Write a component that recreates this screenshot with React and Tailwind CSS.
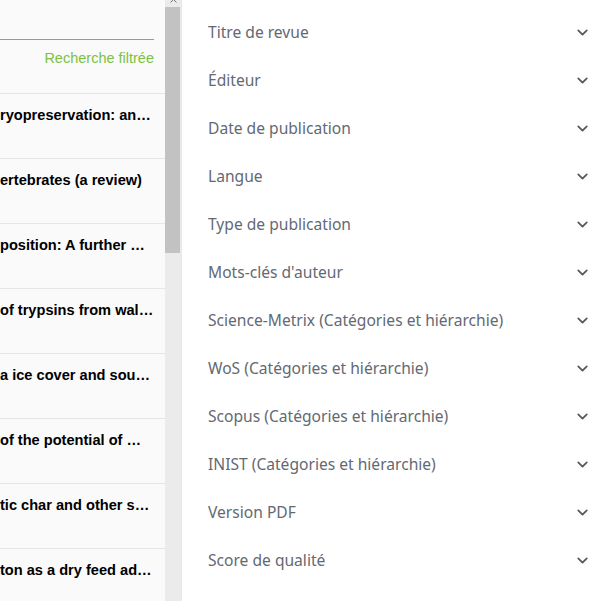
import React from 'react';
import { ChevronDown } from 'lucide-react';

const results = [
  'ryopreservation: an overview of methods',
  'ertebrates (a review)',
  'position: A further model of growth',
  'of trypsins from walleye pollock',
  'a ice cover and southern habitats',
  'of the potential of marine fish oils',
  'tic char and other salmonids',
  'ton as a dry feed additive',
];

const facets = [
  'Titre de revue',
  'Éditeur',
  'Date de publication',
  'Langue',
  'Type de publication',
  "Mots-clés d'auteur",
  'Science-Metrix (Catégories et hiérarchie)',
  'WoS (Catégories et hiérarchie)',
  'Scopus (Catégories et hiérarchie)',
  'INIST (Catégories et hiérarchie)',
  'Version PDF',
  'Score de qualité',
];

export default function App() {
  return (
    <div className="flex h-[601px] w-[609px] overflow-hidden bg-white">
      {/* Results list */}
      <div className="w-[165px] shrink-0 overflow-hidden bg-[#fafafa] font-['Liberation_Sans',Arial,sans-serif]">
        <div className="h-[40px] border-b border-[#e8843c] mr-[11px]" />
        <div className="h-[53px] pt-[8px] pr-[11px] text-right text-[14.5px] text-[#7dc142]">
          Recherche filtrée
        </div>
        {results.map((title) => (
          <div key={title} className="h-[65px] border-t border-[#e6e6e6] pt-[12px] pr-[11px]">
            <div className="truncate whitespace-nowrap text-[14.6px] leading-[18px] font-bold text-black">{title}</div>
          </div>
        ))}
      </div>

      {/* Scrollbar */}
      <div className="w-[17px] shrink-0 border-r border-[#e3e7ee] bg-[#ebebeb]">
        <div className="flex h-[7px] justify-center">
          <svg width="7" height="4" viewBox="0 0 7 4" className="-mt-[1px]">
            <path d="M0.5 3.5 L3.5 0.5 L6.5 3.5" fill="none" stroke="#777" strokeWidth="1" />
          </svg>
        </div>
        <div className="h-[246px] w-[15px] bg-[#c2c2c2]" />
      </div>

      {/* Facets */}
      <div className="flex-1 pt-[8px] pl-[26px] pr-[18px] font-['Noto_Sans',sans-serif]">
        {facets.map((f) => (
          <div key={f} className="flex h-[48px] items-center justify-between">
            <span className="text-[15.6px] leading-[20px] text-[#636973]">{f}</span>
            <ChevronDown size={17} strokeWidth={2.5} className="text-[#555a60]" />
          </div>
        ))}
      </div>
    </div>
  );
}
